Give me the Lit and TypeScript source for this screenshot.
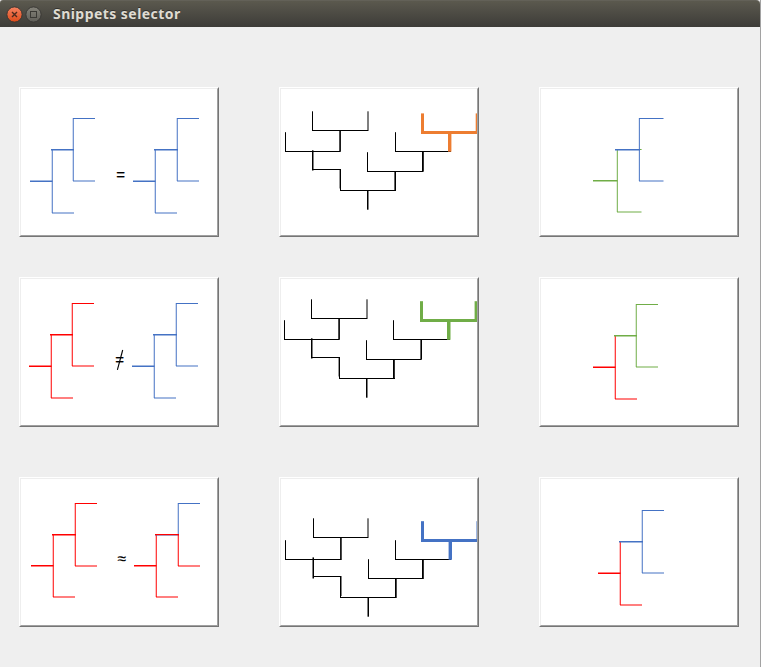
import { LitElement, html, svg, css } from "lit";
import { customElement, property } from "lit/decorators.js";

const BLUE = "#4472c4";
const RED = "#ff0000";
const GREEN = "#70ad47";
const ORANGE = "#ed7d31";
const BLACK = "#000000";

interface Bar { x: number; y: number; w: number; h: number; c: string; }
interface Sign { text: string; x: number; y: number; size: number; slash?: boolean; }
interface Snippet { name: string; bars: Bar[]; sign?: Sign; }

const hor = (c: string, x1: number, x2: number, y: number, h = 1): Bar => ({ x: x1, y, w: x2 - x1, h, c });
const ver = (c: string, x: number, y1: number, y2: number, w = 1): Bar => ({ x, y: y1, w, h: y2 - y1, c });

interface Fork {
  s: number; a: number; b: number; e: number; t: number; bot: number;
  stub: number; root: string; top: string; low?: string; v?: number;
}

// A two-level tree opening to the right: stub, lower branch, upper fork.
const fork = (f: Fork): Bar[] => {
  const low = f.low ?? f.top;
  const v = f.v ?? 0.25;
  const mid = f.t + 31;
  return [
    ver(f.root, f.a - v, mid, f.bot + 1),
    hor(f.root, f.a, f.a + (f.e - f.b), f.bot + 0.5),
    hor(f.root, f.s, f.a + 0.5, f.stub, 1.5),
    hor(f.top, f.a - 1, f.b + 1, mid, 1.5),
    hor(f.top, f.b, f.e, f.t),
    ver(f.top, f.b - v, f.t, mid),
    ver(low, f.b - v, mid, f.t + 63),
    hor(low, f.b, f.e, f.t + 62.5),
    ...(low !== f.top ? [hor(low, f.a - 1, f.b + 1, mid, 1.2)] : []),
  ];
};

const k = BLACK;

const SNIPPETS: Snippet[] = [
  {
    name: "Equal trees",
    bars: [
      ...fork({ s: 18, a: 40, b: 61, e: 83, t: 38, bot: 132, stub: 100.5, root: BLUE, top: BLUE }),
      ...fork({ s: 121, a: 143, b: 165, e: 187, t: 38, bot: 132, stub: 100.5, root: BLUE, top: BLUE }),
    ],
    sign: { text: "=", x: 108.6, y: 100, size: 15 },
  },
  {
    name: "Orange clade",
    bars: [
      ver(k, 40, 31.3, 51), hor(k, 40, 96, 50), ver(k, 95.5, 31.3, 51), ver(k, 67.3, 51, 71.5, 1.6),
      ver(k, 13, 52.2, 72), hor(k, 13, 68.5, 71), ver(k, 40, 70.3, 90.5, 1.5), hor(k, 40, 69, 89),
      ver(k, 67.6, 89, 108.5, 1.4), ver(k, 68, 108, 111), hor(k, 68, 124, 110), ver(k, 95, 110, 129.7, 1.5),
      ver(k, 122.4, 91, 111, 1.6), hor(k, 95, 151, 91), ver(k, 95, 72.2, 92),
      ver(k, 150, 71, 91.7, 1.8), hor(k, 123, 179, 71), ver(k, 123, 52.2, 72),
      hor(ORANGE, 149, 205, 51, 3), ver(ORANGE, 149, 33.4, 54, 3), ver(ORANGE, 203.7, 33.4, 54, 2),
      ver(ORANGE, 176, 54, 71.7, 3.4),
    ],
  },
  {
    name: "Blue fork on green root",
    bars: [
      hor(GREEN, 108, 109.6, 69),
      ver(GREEN, 84.8, 70, 132), hor(GREEN, 85, 109.5, 131.5), hor(GREEN, 61, 85.5, 100, 1.5),
      hor(BLUE, 83, 108, 69, 1.5), hor(BLUE, 107, 131.5, 38), ver(BLUE, 106.85, 38, 101),
      hor(BLUE, 107, 131.5, 100.5),
    ],
  },
  {
    name: "Different trees",
    bars: [
      ...fork({ s: 17, a: 39, b: 60, e: 82, t: 33, bot: 127, stub: 95.5, root: RED, top: RED }),
      ...fork({ s: 120, a: 142, b: 164, e: 186, t: 33, bot: 127, stub: 95.5, root: BLUE, top: BLUE }),
    ],
    sign: { text: "=", x: 107.7, y: 95, size: 15, slash: true },
  },
  {
    name: "Green clade",
    bars: [
      ver(k, 39, 29.3, 49), hor(k, 39, 95, 48), ver(k, 94.5, 29.3, 49), ver(k, 66.3, 49, 69.5, 1.6),
      ver(k, 12, 50.2, 70), hor(k, 12, 67.5, 69), ver(k, 39, 68.3, 88.5, 1.5), hor(k, 39, 68, 87),
      ver(k, 66.6, 87, 106.5, 1.4), ver(k, 67, 106, 109), hor(k, 67, 123, 108), ver(k, 94, 108, 127.7, 1.5),
      ver(k, 121, 89, 109, 1.8), hor(k, 94, 149, 89), ver(k, 94, 70.2, 90),
      ver(k, 148.4, 69, 89.7, 1.6), hor(k, 121, 178, 69), ver(k, 121, 50.2, 70),
      hor(GREEN, 148, 205, 49, 3), ver(GREEN, 148, 31.2, 52, 3), ver(GREEN, 202.6, 31.2, 52, 2.4),
      ver(GREEN, 175, 52, 69.8, 3.5),
    ],
  },
  {
    name: "Green fork on red root",
    bars: fork({ s: 61, a: 83, b: 104, e: 126, t: 34, bot: 128, stub: 96.5, root: RED, top: GREEN }),
  },
  {
    name: "Similar trees",
    bars: [
      ...fork({ s: 19, a: 41, b: 63, e: 85, t: 33, bot: 126, stub: 95, root: RED, top: RED }),
      ...fork({ s: 122, a: 144, b: 166, e: 188, t: 33, bot: 126, stub: 95, root: RED, top: BLUE, low: RED }),
    ],
    sign: { text: "≈", x: 109.8, y: 94.4, size: 15.5 },
  },
  {
    name: "Blue clade",
    bars: [
      ver(k, 41, 48.3, 68), hor(k, 41, 96, 67), ver(k, 95.5, 48.3, 68), ver(k, 68.1, 68, 89.6, 1.6),
      ver(k, 13, 70.2, 90), hor(k, 13, 69.5, 89), ver(k, 40.5, 87.4, 108.5, 1.5), hor(k, 41, 69, 106),
      ver(k, 68, 106, 126, 1.5), ver(k, 68, 126, 128), hor(k, 68, 124, 127), ver(k, 95.5, 127, 146.7, 1.5),
      ver(k, 123, 108, 128, 1.7), hor(k, 96, 151, 108), ver(k, 96, 89.2, 109),
      ver(k, 150, 89, 109, 1.8), hor(k, 123, 179, 89), ver(k, 123, 70.2, 90),
      hor(BLUE, 149, 205, 69, 3), ver(BLUE, 149, 51.2, 72, 3), ver(BLUE, 204.5, 51.2, 72, 1),
      ver(BLUE, 176.6, 72, 89.8, 3.4),
    ],
  },
  {
    name: "Blue fork on red root",
    bars: fork({ s: 66, a: 88, b: 110, e: 132, t: 40, bot: 134, stub: 102.5, root: RED, top: BLUE }),
  },
];

@customElement("snippet-button")
export class SnippetButton extends LitElement {
  @property({ attribute: false }) snippet!: Snippet;

  static styles = css`
    :host { display: block; width: 200px; height: 150px; }
    .outer {
      display: block; box-sizing: border-box; width: 200px; height: 150px; padding: 0; margin: 0;
      border: 1px solid; border-color: #ffffff #757575 #757575 #ffffff; background: #ffffff;
    }
    .inner {
      display: block; box-sizing: border-box; width: 198px; height: 148px;
      border: 1px solid; border-color: #eeeeee #a0a0a0 #a0a0a0 #eeeeee;
    }
    .art { display: block; width: 196px; height: 146px; }
    .sign {
      font-family: "Liberation Sans", Arial, sans-serif; text-anchor: middle;
      fill: #000; stroke: #000; stroke-width: 0.2;
    }
    .slash { stroke: #000; stroke-width: 1.1; }
  `;

  render() {
    const { bars, sign, name } = this.snippet;
    return html`<button class="outer" aria-label=${name}>
      <span class="inner">
        <svg class="art" viewBox="9 9 196 146">
          ${bars.map((b) => svg`<rect x=${b.x} y=${b.y} width=${b.w} height=${b.h} fill=${b.c}></rect>`)}
          ${sign
            ? svg`<text class="sign" x=${sign.x} y=${sign.y} font-size=${sign.size}>${sign.text}</text>`
            : null}
          ${sign?.slash ? svg`<line class="slash" x1="105.4" y1="99.8" x2="110.7" y2="80"></line>` : null}
        </svg>
      </span>
    </button>`;
  }
}

@customElement("app-root")
export class AppRoot extends LitElement {
  static styles = css`
    :host {
      display: flex; flex-direction: column; box-sizing: border-box;
      width: 761px; height: 667px; background: #efefef; border-right: 1px solid #a2a2a2; overflow: hidden;
    }
    .bar {
      display: flex; align-items: center; flex: none; box-sizing: border-box; height: 27px; padding-left: 6px;
      background: linear-gradient(#5b594e, #55534a 20%, #3d3c38);
      border-top: 1px solid #636158; border-radius: 3px 4px 0 0;
    }
    .control { display: block; width: 17px; height: 17px; margin-right: 2px; }
    .title {
      margin: 0 0 0 9px; font: 700 14px/26px "Noto Sans", "Open Sans", sans-serif; letter-spacing: 0.45px;
      color: #dfdbd2; text-shadow: 0 -1px 0 #33322e; white-space: nowrap;
    }
    .grid {
      display: grid; grid-template-columns: repeat(3, 200px); grid-template-rows: 190px 200px 150px;
      column-gap: 60px; padding: 60px 0 0 19px;
    }
  `;

  render() {
    return html`
      <header class="bar">
        <svg class="control" viewBox="0 0 17 17">
          <defs>
            <linearGradient id="close" x2="0" y2="1">
              <stop offset="0" stop-color="#f58362"></stop><stop offset="1" stop-color="#dd4a18"></stop>
            </linearGradient>
          </defs>
          <circle cx="8.5" cy="8.5" r="7.6" fill="url(#close)" stroke="#3a3430" stroke-width="0.9"></circle>
          <path d="M6 6l5 5M11 6l-5 5" stroke="#4c2a1e" stroke-width="1.4" fill="none"></path>
        </svg>
        <svg class="control" viewBox="0 0 17 17">
          <defs>
            <linearGradient id="max" x2="0" y2="1">
              <stop offset="0" stop-color="#85837a"></stop><stop offset="1" stop-color="#5f5e58"></stop>
            </linearGradient>
          </defs>
          <circle cx="8.5" cy="8.5" r="7.6" fill="url(#max)" stroke="#383733" stroke-width="0.9"></circle>
          <rect x="5.5" y="5.5" width="6" height="6" fill="none" stroke="#3a3935" stroke-width="1"></rect>
        </svg>
        <h1 class="title">Snippets selector</h1>
      </header>
      <main class="grid">
        ${SNIPPETS.map((s) => html`<snippet-button .snippet=${s}></snippet-button>`)}
      </main>
    `;
  }
}
